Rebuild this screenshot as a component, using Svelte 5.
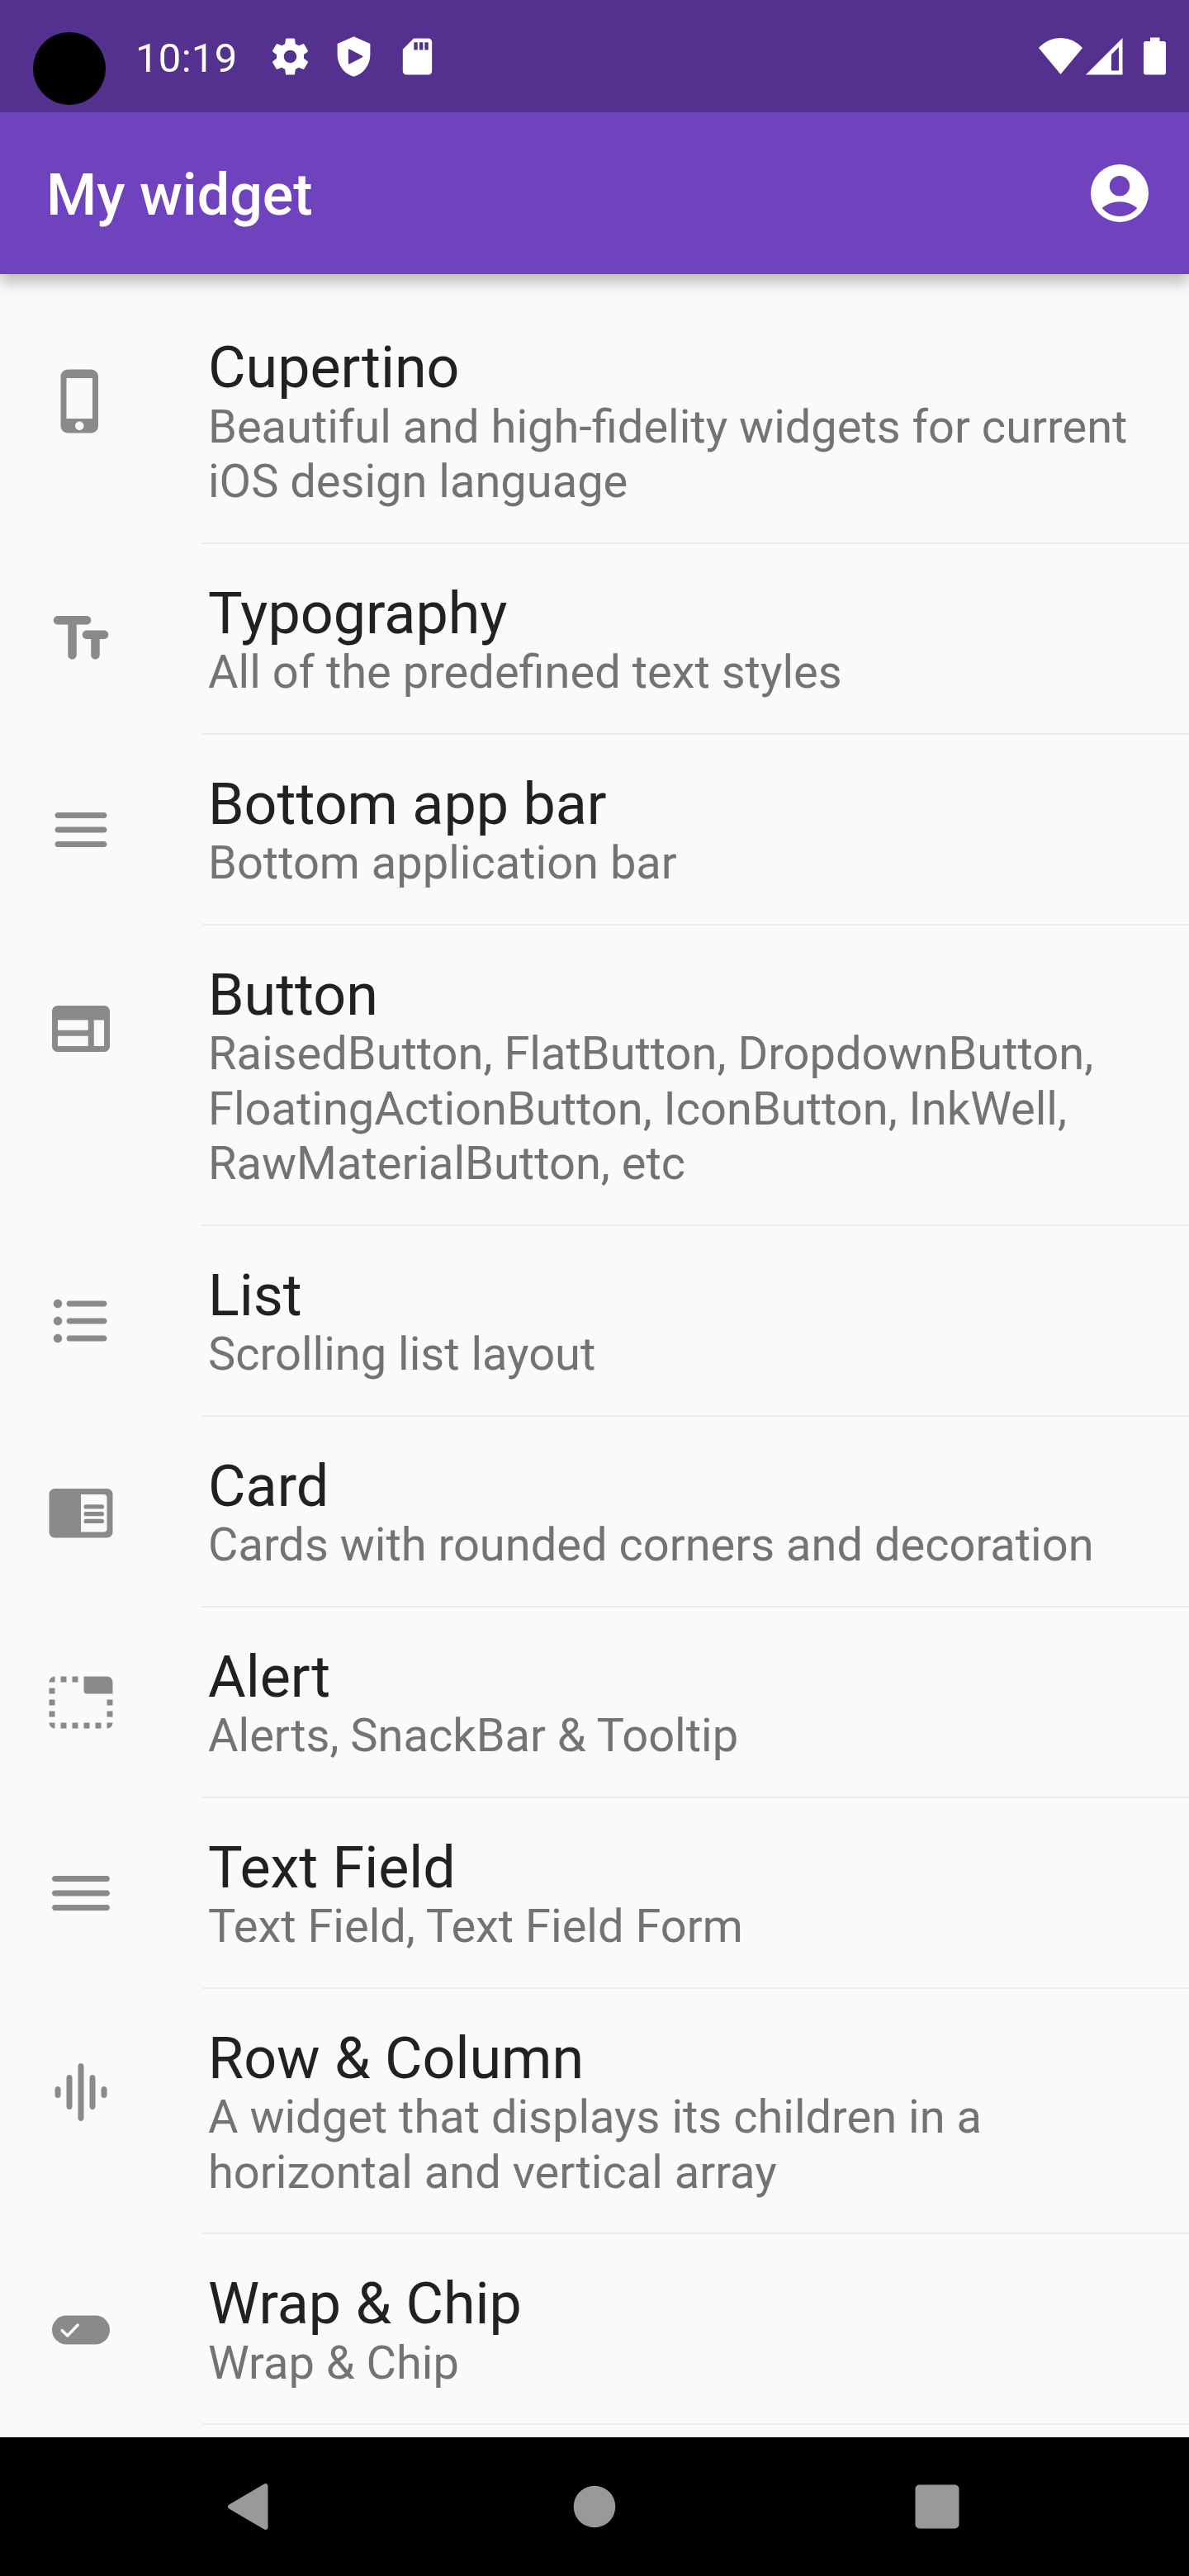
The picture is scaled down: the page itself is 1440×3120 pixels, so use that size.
<script>
  const items = [
    { icon: 'phone', title: 'Cupertino', lines: ['Beautiful and high-fidelity widgets for current', 'iOS design language'] },
    { icon: 'text', title: 'Typography', lines: ['All of the predefined text styles'] },
    { icon: 'menu', title: 'Bottom app bar', lines: ['Bottom application bar'] },
    { icon: 'web', title: 'Button', lines: ['RaisedButton, FlatButton, DropdownButton,', 'FloatingActionButton, IconButton, InkWell,', 'RawMaterialButton, etc'] },
    { icon: 'list', title: 'List', lines: ['Scrolling list layout'] },
    { icon: 'reader', title: 'Card', lines: ['Cards with rounded corners and decoration'] },
    { icon: 'tab', title: 'Alert', lines: ['Alerts, SnackBar & Tooltip'] },
    { icon: 'dehaze', title: 'Text Field', lines: ['Text Field, Text Field Form'] },
    { icon: 'eq', title: 'Row & Column', lines: ['A widget that displays its children in a', 'horizontal and vertical array'] },
    { icon: 'chip', title: 'Wrap & Chip', lines: ['Wrap & Chip'] }
  ];

  const paths = {
    phone: 'M15.5 1h-8C6.12 1 5 2.12 5 3.5v17C5 21.88 6.12 23 7.5 23h8c1.38 0 2.5-1.12 2.5-2.5v-17C18 2.12 16.88 1 15.5 1zm-4 21c-.83 0-1.5-.67-1.5-1.5s.67-1.5 1.5-1.5 1.5.67 1.5 1.5-.67 1.5-1.5 1.5zm4.5-4H7V4h9v14z',
    text: 'M2.5 5.5C2.5 6.33 3.17 7 4 7h3.5v10.5c0 .83.67 1.5 1.5 1.5s1.5-.67 1.5-1.5V7H14c.83 0 1.5-.67 1.5-1.5S14.83 4 14 4H4c-.83 0-1.5.67-1.5 1.5zM20 9h-6c-.83 0-1.5.67-1.5 1.5S13.17 12 14 12h1.5v5.5c0 .83.67 1.5 1.5 1.5s1.5-.67 1.5-1.5V12H20c.83 0 1.5-.67 1.5-1.5S20.83 9 20 9z',
    menu: 'M4 18h16c.55 0 1-.45 1-1s-.45-1-1-1H4c-.55 0-1 .45-1 1s.45 1 1 1zm0-5h16c.55 0 1-.45 1-1s-.45-1-1-1H4c-.55 0-1 .45-1 1s.45 1 1 1zM3 7c0 .55.45 1 1 1h16c.55 0 1-.45 1-1s-.45-1-1-1H4c-.55 0-1 .45-1 1z',
    web: 'M20 4H4c-1.1 0-2 .9-2 2v12c0 1.1.9 2 2 2h16c1.1 0 2-.9 2-2V6c0-1.1-.9-2-2-2zM14.5 18H4v-3.5h10.5V18zm0-5.5H4V9h10.5v3.5zM20 18h-3.5V9H20v9z',
    list: 'M4 10.5c-.83 0-1.5.67-1.5 1.5s.67 1.5 1.5 1.5 1.5-.67 1.5-1.5-.67-1.5-1.5-1.5zm0-6c-.83 0-1.5.67-1.5 1.5S3.17 7.5 4 7.5 5.5 6.83 5.5 6 4.83 4.5 4 4.5zm0 12c-.83 0-1.5.68-1.5 1.5s.68 1.5 1.5 1.5 1.5-.68 1.5-1.5-.67-1.5-1.5-1.5zM8 19h12c.55 0 1-.45 1-1s-.45-1-1-1H8c-.55 0-1 .45-1 1s.45 1 1 1zm0-6h12c.55 0 1-.45 1-1s-.45-1-1-1H8c-.55 0-1 .45-1 1s.45 1 1 1zM7 6c0 .55.45 1 1 1h12c.55 0 1-.45 1-1s-.45-1-1-1H8c-.55 0-1 .45-1 1z',
    reader: 'M21 4H3c-1.1 0-2 .9-2 2v13c0 1.1.9 2 2 2h18c1.1 0 2-.9 2-2V6c0-1.1-.9-2-2-2zm-1 15h-8V6h8c.55 0 1 .45 1 1v11c0 .55-.45 1-1 1zM19.25 9.5h-5.5a.75.75 0 0 0 0 1.5h5.5a.75.75 0 0 0 0-1.5zm0 2.5h-5.5a.75.75 0 0 0 0 1.5h5.5a.75.75 0 0 0 0-1.5zm0 2.5h-5.5a.75.75 0 0 0 0 1.5h5.5a.75.75 0 0 0 0-1.5z',
    tab: 'M1 9h2V7H1v2zm0 4h2v-2H1v2zm0-8h2V3c-1.1 0-2 .9-2 2zm8 16h2v-2H9v2zm-8-4h2v-2H1v2zm2 4v-2H1c0 1.1.9 2 2 2zM21 3h-8v5c0 .55.45 1 1 1h9V5c0-1.1-.9-2-2-2zm0 14h2v-2h-2v2zM9 5h2V3H9v2zM5 21h2v-2H5v2zM5 5h2V3H5v2zm16 16c1.1 0 2-.9 2-2h-2v2zm0-8h2v-2h-2v2zm-8 8h2v-2h-2v2zm4 0h2v-2h-2v2z',
    dehaze: 'M3 18h18c.55 0 1-.45 1-1s-.45-1-1-1H3c-.55 0-1 .45-1 1s.45 1 1 1zm0-5h18c.55 0 1-.45 1-1s-.45-1-1-1H3c-.55 0-1 .45-1 1s.45 1 1 1zM2 7c0 .55.45 1 1 1h18c.55 0 1-.45 1-1s-.45-1-1-1H3c-.55 0-1 .45-1 1z',
    eq: 'M8 18c.55 0 1-.45 1-1V7c0-.55-.45-1-1-1s-1 .45-1 1v10c0 .55.45 1 1 1zm4 4c.55 0 1-.45 1-1V3c0-.55-.45-1-1-1s-1 .45-1 1v18c0 .55.45 1 1 1zm-8-8c.55 0 1-.45 1-1v-2c0-.55-.45-1-1-1s-1 .45-1 1v2c0 .55.45 1 1 1zm12 4c.55 0 1-.45 1-1V7c0-.55-.45-1-1-1s-1 .45-1 1v10c0 .55.45 1 1 1zm3-7v2c0 .55.45 1 1 1s1-.45 1-1v-2c0-.55-.45-1-1-1s-1 .45-1 1z',
    chip: 'M17 7H7a5 5 0 0 0 0 10h10a5 5 0 0 0 0-10z'
  };
</script>

<div class="screen">
  <header class="status">
    <span class="camera"></span>
    <span class="time">10:19</span>
    <svg class="notice" viewBox="0 0 24 24"><path d="M19.43 12.98c.04-.32.07-.64.07-.98s-.03-.66-.07-.98l2.11-1.65c.19-.15.24-.42.12-.64l-2-3.46c-.12-.22-.39-.3-.61-.22l-2.49 1c-.52-.4-1.08-.73-1.69-.98l-.38-2.65C14.46 2.18 14.25 2 14 2h-4c-.25 0-.46.18-.49.42l-.38 2.65c-.61.25-1.17.59-1.69.98l-2.49-1c-.23-.09-.49 0-.61.22l-2 3.46c-.13.22-.07.49.12.64l2.11 1.65c-.04.32-.07.65-.07.98s.03.66.07.98l-2.11 1.65c-.19.15-.24.42-.12.64l2 3.46c.12.22.39.3.61.22l2.49-1c.52.4 1.08.73 1.69.98l.38 2.65c.03.24.24.42.49.42h4c.25 0 .46-.18.49-.42l.38-2.65c.61-.25 1.17-.59 1.69-.98l2.49 1c.23.09.49 0 .61-.22l2-3.46c.12-.22.07-.49-.12-.64l-2.11-1.65zM12 15.5c-1.93 0-3.5-1.57-3.5-3.5s1.57-3.5 3.5-3.5 3.5 1.57 3.5 3.5-1.57 3.5-3.5 3.5z" /></svg>
    <svg class="notice" viewBox="0 0 24 24"><path fill-rule="evenodd" d="M12 1 3 5v6c0 5.55 3.84 10.74 9 12 5.16-1.26 9-6.45 9-12V5l-9-4zM9 8.4v7.2q0 .9.8.4l6.8-3.5q.8-.5 0-1L9.8 8q-.8-.5-.8.4z" /></svg>
    <svg class="notice" viewBox="0 0 24 24"><path fill-rule="evenodd" d="M18 2h-8L4 8v12c0 1.1.9 2 2 2h12c1.1 0 2-.9 2-2V4c0-1.1-.9-2-2-2zM10.1 4.2h2v4.2h-2zM13.1 4.2h2v4.2h-2zM16 4.2h2v4.2h-2z" /></svg>
    <div class="system">
      <svg width="53" height="46" viewBox="0 0 53 46"><path d="M0 13Q11 1 26.500 1T53 13L26.500 45z" /></svg>
      <svg width="45" height="46" viewBox="0 0 45 46"><path fill-rule="evenodd" d="M0 45.500 44.500 1v44.500zM31 21v19.500h9V12z" /></svg>
      <svg class="battery" width="27" height="46" viewBox="0 0 27 46"><path d="M8 .5h11.500V5H24.500Q27 5 27 7.500V43Q27 45.500 24.500 45.500H2.500Q0 45.500 0 43V7.500Q0 5 2.500 5H8z" /></svg>
    </div>
  </header>

  <div class="appbar">
    <h1>My widget</h1>
    <svg class="account" viewBox="0 0 24 24"><path fill-rule="evenodd" d="M12 2a10 10 0 1 0 0 20 10 10 0 0 0 0-20zm0 4a3.500 3.500 0 1 1 0 7 3.500 3.500 0 0 1 0-7zM5.900 17.150C7.600 15.800 9.700 14.950 12 14.950s4.400.85 6.100 2.200C16.650 18.900 14.500 20 12 20s-4.650-1.100-6.100-2.850z" /></svg>
  </div>

  <main>
    {#each items as item}
      <section class="row" class:tall={item.lines.length > 1}>
        <svg class="icon" viewBox="0 0 24 24">
          <path d={paths[item.icon]} />
          {#if item.icon === 'chip'}
            <path class="check" d="M5.500 12.200 7.350 14 10.900 10.300" />
          {/if}
        </svg>
        <div class="body">
          <h2>{item.title}</h2>
          {#each item.lines as line}
            <p>{line}</p>
          {/each}
        </div>
      </section>
    {/each}
  </main>

  <nav>
    <svg viewBox="0 0 60 60"><path class="back" d="M4 30 46.500 5v50z" /></svg>
    <svg viewBox="0 0 60 60"><circle cx="30" cy="30" r="25.300" /></svg>
    <svg viewBox="0 0 60 60"><rect x="3.500" y="3.500" width="53" height="53" rx="5" /></svg>
  </nav>
</div>

<style>
  :global(body) {
    margin: 0;
    background: #fafafa;
  }
  .screen {
    width: 1440px;
    height: 3120px;
    display: flex;
    flex-direction: column;
    overflow: hidden;
    background: #fafafa;
    font-family: Roboto, 'Liberation Sans', sans-serif;
  }
  svg {
    display: block;
    flex: none;
  }
  .status {
    flex: none;
    height: 136px;
    box-sizing: border-box;
    padding: 0 28px 0 40px;
    display: flex;
    align-items: center;
    background: #54318e;
    color: #fff;
    fill: #fff;
    position: relative;
    z-index: 2;
  }
  .camera {
    width: 88px;
    height: 88px;
    margin-top: 30px;
    border-radius: 50%;
    background: #000;
  }
  .time {
    width: 161px;
    margin-left: 36px;
    padding-top: 6px;
    font-size: 49px;
    line-height: 58px;
    letter-spacing: 0.3px;
  }
  .notice {
    width: 53px;
    height: 53px;
    margin-right: 24px;
  }
  .system {
    margin-left: auto;
    display: flex;
    gap: 4px;
    padding-bottom: 1px;
  }
  .battery {
    margin-left: 21px;
  }
  .appbar {
    flex: none;
    height: 196px;
    box-sizing: border-box;
    padding: 0 42px 0 56px;
    display: flex;
    align-items: center;
    justify-content: space-between;
    background: #6f43be;
    box-shadow: 0 7px 14px -3px rgba(0, 0, 0, 0.1), 0 14px 17px 0 rgba(0, 0, 0, 0.14), 0 3px 18px 0 rgba(0, 0, 0, 0.06);
    position: relative;
    z-index: 1;
  }
  h1 {
    margin: 0;
    padding-top: 4px;
    font-size: 70px;
    font-weight: 500;
    line-height: 82px;
    color: #fff;
  }
  .account {
    width: 84px;
    height: 84px;
    fill: #fff;
  }
  main {
    flex: 1;
    min-height: 0;
    padding-top: 29px;
    overflow: hidden;
  }
  .row {
    display: flex;
    align-items: center;
    padding-left: 56px;
  }
  .row.tall {
    align-items: flex-start;
  }
  .icon {
    width: 84px;
    height: 84px;
    margin-right: 105px;
    fill: #8a8a8a;
  }
  .tall .icon {
    margin-top: 83px;
  }
  .check {
    fill: none;
    stroke: #fafafa;
    stroke-width: 1;
    stroke-linecap: round;
    stroke-linejoin: round;
  }
  .body {
    flex: 1;
    box-sizing: border-box;
    padding: 47px 0 40px 7px;
    border-bottom: 2px solid #ebebeb;
  }
  h2 {
    margin: 0;
    font-size: 70px;
    font-weight: 400;
    line-height: 75.5px;
    color: #212121;
  }
  p {
    margin: 0;
    font-size: 56px;
    line-height: 66.5px;
    color: #737373;
    white-space: nowrap;
  }
  nav {
    flex: none;
    height: 168px;
    display: flex;
    align-items: center;
    justify-content: center;
    gap: 355px;
    background: #000;
    fill: #999;
  }
  nav svg {
    width: 60px;
    height: 60px;
  }
  .back {
    stroke: #999;
    stroke-width: 6;
    stroke-linejoin: round;
  }
</style>
